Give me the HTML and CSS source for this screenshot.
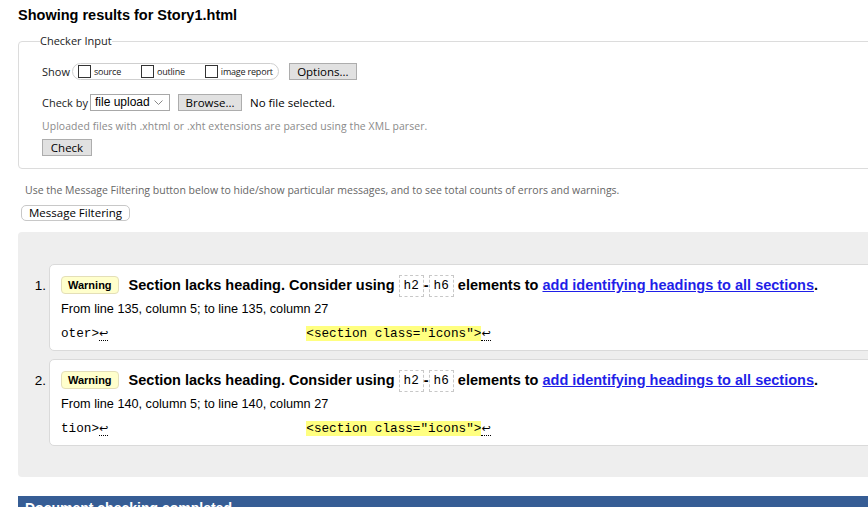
FILE: index.html
```html
<!DOCTYPE html>
<html lang="en">
<head>
<meta charset="utf-8">
<title>Showing results for Story1.html</title>
<link rel="stylesheet" href="styles.css">
</head>
<body>
<h2 class="title">Showing results for Story1.html</h2>
<form class="checker">
  <fieldset class="checker-input">
    <legend>Checker Input</legend>
    <div class="row show-row">
      <span class="lbl">Show</span>
      <span class="show-pill">
        <label class="opt"><span class="cb"></span>source</label>
        <label class="opt"><span class="cb"></span>outline</label>
        <label class="opt"><span class="cb"></span>image report</label>
      </span>
      <button type="button" class="btn btn-options">Options...</button>
    </div>
    <div class="row by-row">
      <span class="lbl">Check by</span>
      <span class="select"><span class="select-text">file upload</span><svg class="chev" width="9" height="5" viewBox="0 0 9 5"><path d="M0.5 0.5 L4.5 4.5 L8.5 0.5" fill="none" stroke="#888" stroke-width="1"/></svg></span>
      <button type="button" class="btn btn-browse">Browse...</button>
      <span class="nofile">No file selected.</span>
    </div>
    <p class="note">Uploaded files with .xhtml or .xht extensions are parsed using the XML parser.</p>
    <button type="button" class="btn btn-check">Check</button>
  </fieldset>
</form>
<p class="filter-hint">Use the Message Filtering button below to hide/show particular messages, and to see total counts of errors and warnings.</p>
<button type="button" class="btn-filter">Message Filtering</button>
<div class="results">
  <ol class="messages">
    <li class="msg">
      <span class="num">1.</span>
      <div class="msg-box">
        <p class="msg-head"><span class="badge">Warning</span><span class="msg-text">Section lacks heading. Consider using <code class="tag">h2</code>-<code class="tag">h6</code> elements to <a href="#">add identifying headings to all sections</a>.</span></p>
        <p class="location">From line 135, column 5; to line 135, column 27</p>
        <p class="extract"><code>oter&gt;<span class="lf">↩</span>                          <mark>&lt;section class="icons"&gt;</mark><span class="lf">↩</span></code></p>
      </div>
    </li>
    <li class="msg">
      <span class="num">2.</span>
      <div class="msg-box">
        <p class="msg-head"><span class="badge">Warning</span><span class="msg-text">Section lacks heading. Consider using <code class="tag">h2</code>-<code class="tag">h6</code> elements to <a href="#">add identifying headings to all sections</a>.</span></p>
        <p class="location">From line 140, column 5; to line 140, column 27</p>
        <p class="extract"><code>tion&gt;<span class="lf">↩</span>                          <mark>&lt;section class="icons"&gt;</mark><span class="lf">↩</span></code></p>
      </div>
    </li>
  </ol>
</div>
<div class="done-bar">Document checking completed.</div>
</body>
</html>
```
FILE: styles.css
```css
html {
  overflow: hidden;
}
body {
  margin: 0;
  padding: 0 0 0 18px;
  width: 1100px;
  font-family: "Liberation Sans", Arial, sans-serif;
  color: #000;
  background: #fff;
}
.title {
  margin: 7px 0 0;
  font-size: 14.5px;
  line-height: 17px;
  font-weight: bold;
}
.checker {
  margin: 10px 0 0;
}
.checker-input {
  margin: 0;
  border: 1px solid #dcdcdc;
  border-radius: 4px;
  padding: 0 0 12px 23px;
  font-family: "Open Sans", sans-serif;
  font-size: 11px;
  color: #222;
}
.checker-input legend {
  padding: 0;
  margin-left: -2px;
  line-height: 14px;
  font-size: 11px;
  color: #222;
}
.row {
  display: flex;
  align-items: center;
  height: 17px;
  white-space: nowrap;
}
.show-row {
  margin-top: 15px;
}
.by-row {
  margin-top: 14px;
}
.lbl {
  font-size: 11px;
}
.show-pill {
  display: inline-flex;
  align-items: center;
  height: 15px;
  margin-left: 2px;
  padding: 0 5px;
  border: 1px solid #cfcfcf;
  border-radius: 9px;
  gap: 20px;
}
.opt {
  display: inline-flex;
  align-items: center;
  gap: 3px;
  font-size: 9px;
  letter-spacing: -0.2px;
  color: #222;
}
.cb {
  display: inline-block;
  width: 11px;
  height: 11px;
  border: 1px solid #333;
  background: #fff;
}
.btn {
  box-sizing: border-box;
  height: 17px;
  padding: 0;
  border: 1px solid #adadad;
  background: #e1e1e1;
  font-family: "Open Sans", sans-serif;
  font-size: 11.5px;
  line-height: 15px;
  color: #000;
}
.btn-options {
  width: 68px;
  margin-left: 10px;
}
.select {
  box-sizing: border-box;
  display: inline-flex;
  align-items: center;
  justify-content: space-between;
  width: 80px;
  height: 17px;
  margin-left: 2px;
  padding: 0 6px 0 4px;
  border: 1px solid #a8a8a8;
  font-family: "Liberation Sans", Arial, sans-serif;
  font-size: 12px;
  line-height: 15px;
  color: #000;
  background: #fff;
}
.select-text {
  white-space: nowrap;
}
.btn-browse {
  width: 64px;
  margin-left: 8px;
}
.nofile {
  margin-left: 8px;
  font-size: 11.5px;
  color: #000;
}
.note {
  margin: 8px 0 0;
  font-size: 10.4px;
  line-height: 14px;
  letter-spacing: 0.1px;
  color: #8a8a8a;
}
.btn-check {
  display: block;
  width: 50px;
  margin-top: 6px;
}
.filter-hint {
  margin: 14px 0 0;
  padding-left: 7px;
  font-family: "Open Sans", sans-serif;
  font-size: 10.5px;
  line-height: 14px;
  color: #666;
}
.btn-filter {
  box-sizing: border-box;
  display: block;
  height: 16px;
  margin: 8px 0 0 3px;
  padding: 0 7px;
  border: 1px solid #c8c8c8;
  border-radius: 5px;
  background: #fff;
  font-family: "Open Sans", sans-serif;
  font-size: 11.5px;
  line-height: 14px;
  color: #000;
}
.results {
  margin-top: 11px;
  padding: 32px 0 31px;
  background: #eeeeee;
  border-radius: 4px;
}
.messages {
  margin: 0;
  padding: 0;
  list-style: none;
}
.msg {
  display: flex;
  align-items: baseline;
}
.msg + .msg {
  margin-top: 8px;
}
.num {
  box-sizing: border-box;
  width: 31px;
  padding-right: 3px;
  text-align: right;
  font-size: 13.5px;
}
.msg-box {
  flex: 1;
  padding: 9px 11px 8px;
  background: #fff;
  border: 1px solid #dadada;
  border-radius: 5px;
}
.msg-head {
  margin: 0;
  font-size: 14.5px;
  line-height: 22px;
  font-weight: bold;
}
.badge {
  display: inline-block;
  margin-right: 10px;
  padding: 0 6px;
  border: 1px solid #e4dfb8;
  border-radius: 4px;
  background: #ffffcc;
  font-size: 11px;
  line-height: 16px;
  vertical-align: 1px;
}
.tag {
  display: inline-block;
  padding: 0 4px;
  border: 1px dashed #c8c8c8;
  font-family: "Liberation Mono", "Courier New", monospace;
  font-size: 12.7px;
  font-weight: normal;
  line-height: 20px;
  vertical-align: middle;
}
.msg-head a {
  color: #1f1fe8;
}
.location {
  margin: 4px 0 0;
  font-size: 12.7px;
  line-height: 16px;
}
.extract {
  margin: 7px 0 0;
  line-height: 16px;
  white-space: pre;
}
.extract code {
  font-family: "Liberation Mono", "Courier New", monospace;
  font-size: 12.7px;
}
.extract mark {
  background: #ffff80;
  color: #000;
}
.lf {
  font-family: "DejaVu Sans", sans-serif;
  font-size: 11px;
  border-bottom: 1px dotted #000;
}
.done-bar {
  margin-top: 19px;
  padding: 4px 7px;
  background: #365d95;
  color: #fff;
  font-size: 14px;
  font-weight: bold;
  line-height: 17px;
}
```
